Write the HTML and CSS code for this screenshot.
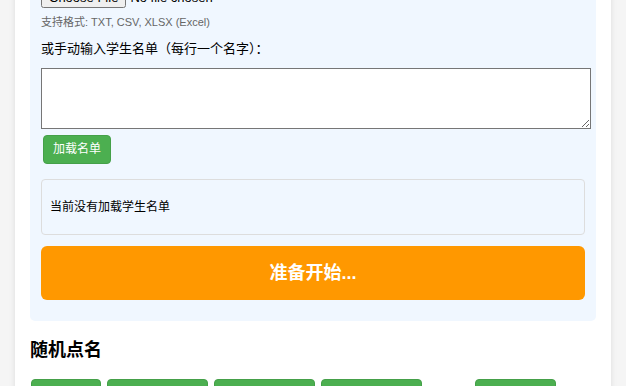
FILE: index.html
```html
<!DOCTYPE html>
<html lang="zh-CN">
<head>
  <meta charset="UTF-8">
  <title>随机点名</title>
  <link rel="stylesheet" href="styles.css">
</head>
<body>

<div class="container">
  <div class="panel-nombres">
    <h3>导入学生名单</h3>
    <input type="file" class="archivo">
    <div class="pista">支持格式: TXT, CSV, XLSX (Excel)</div>
    <label class="etiqueta" for="lista">或手动输入学生名单（每行一个名字）：</label>
    <textarea id="lista" class="lista"></textarea>
    <button class="boton-verde cargar">加载名单</button>
    <div class="estado">当前没有加载学生名单</div>
    <button class="boton-inicio">准备开始...</button>
  </div>

  <h2>随机点名</h2>
  <div class="acciones">
    <button class="boton-verde">开始</button>
    <button class="boton-verde ancho">开始随机点名</button>
    <button class="boton-verde ancho">重新开始点名</button>
    <button class="boton-verde ancho">查看点名记录</button>
    <span class="hueco"></span>
    <button class="boton-verde medio">导出记录</button>
  </div>
</div>

</body>
</html>
```

FILE: styles.css
```css
body {
  font-family: "Liberation Sans", Arial, "Noto Sans CJK SC", sans-serif;
  background-color: #f5f5f5;
  color: #000;
  margin: 0;
}
.container {
  background: white;
  margin: -68px 15px 0;
  padding: 15px;
  box-shadow: 0 0 6px rgba(0, 0, 0, 0.1);
}
.panel-nombres {
  background-color: #f0f7ff;
  border-radius: 5px;
  padding: 11px 11px 21px;
}
.panel-nombres h3 {
  font-size: 16px;
  line-height: 19px;
  margin: 0 0 10px;
}
.archivo {
  display: block;
  font-size: 13px;
}
.pista {
  margin-top: 7px;
  font-size: 11px;
  line-height: 14px;
  color: #666;
}
.etiqueta {
  display: block;
  margin-top: 12px;
  font-size: 13px;
  line-height: 16px;
}
.lista {
  display: block;
  width: 100%;
  height: 55px;
  margin: 11px 0 0;
  padding: 2px;
  border: 1px solid #767676;
}
.boton-verde {
  background-color: #4caf50;
  border: 1px solid #45a049;
  color: white;
  border-radius: 4px;
  font-family: inherit;
  font-size: 12px;
  line-height: 15px;
  padding: 6px 9px;
  cursor: pointer;
}
.cargar {
  display: block;
  margin: 6px 2px 0;
}
.estado {
  margin-top: 15px;
  border: 1px solid #ddd;
  border-radius: 4px;
  padding: 20px 8px;
  font-size: 12px;
  line-height: 14px;
}
.boton-inicio {
  display: block;
  width: 100%;
  margin-top: 11px;
  background-color: #ff9800;
  border: none;
  border-radius: 6px;
  color: white;
  font-family: inherit;
  font-size: 18px;
  font-weight: bold;
  line-height: 24px;
  padding: 15px;
  cursor: pointer;
}
h2 {
  font-size: 18px;
  line-height: 22px;
  margin: 18px 0 18px;
}
.acciones {
  display: flex;
  gap: 6px;
  padding-left: 1px;
}
.acciones .boton-verde {
  width: 70px;
  padding: 10px;
}
.acciones .ancho { width: 101px; }
.acciones .medio { width: 81px; }
.hueco { width: 41px; }
```
